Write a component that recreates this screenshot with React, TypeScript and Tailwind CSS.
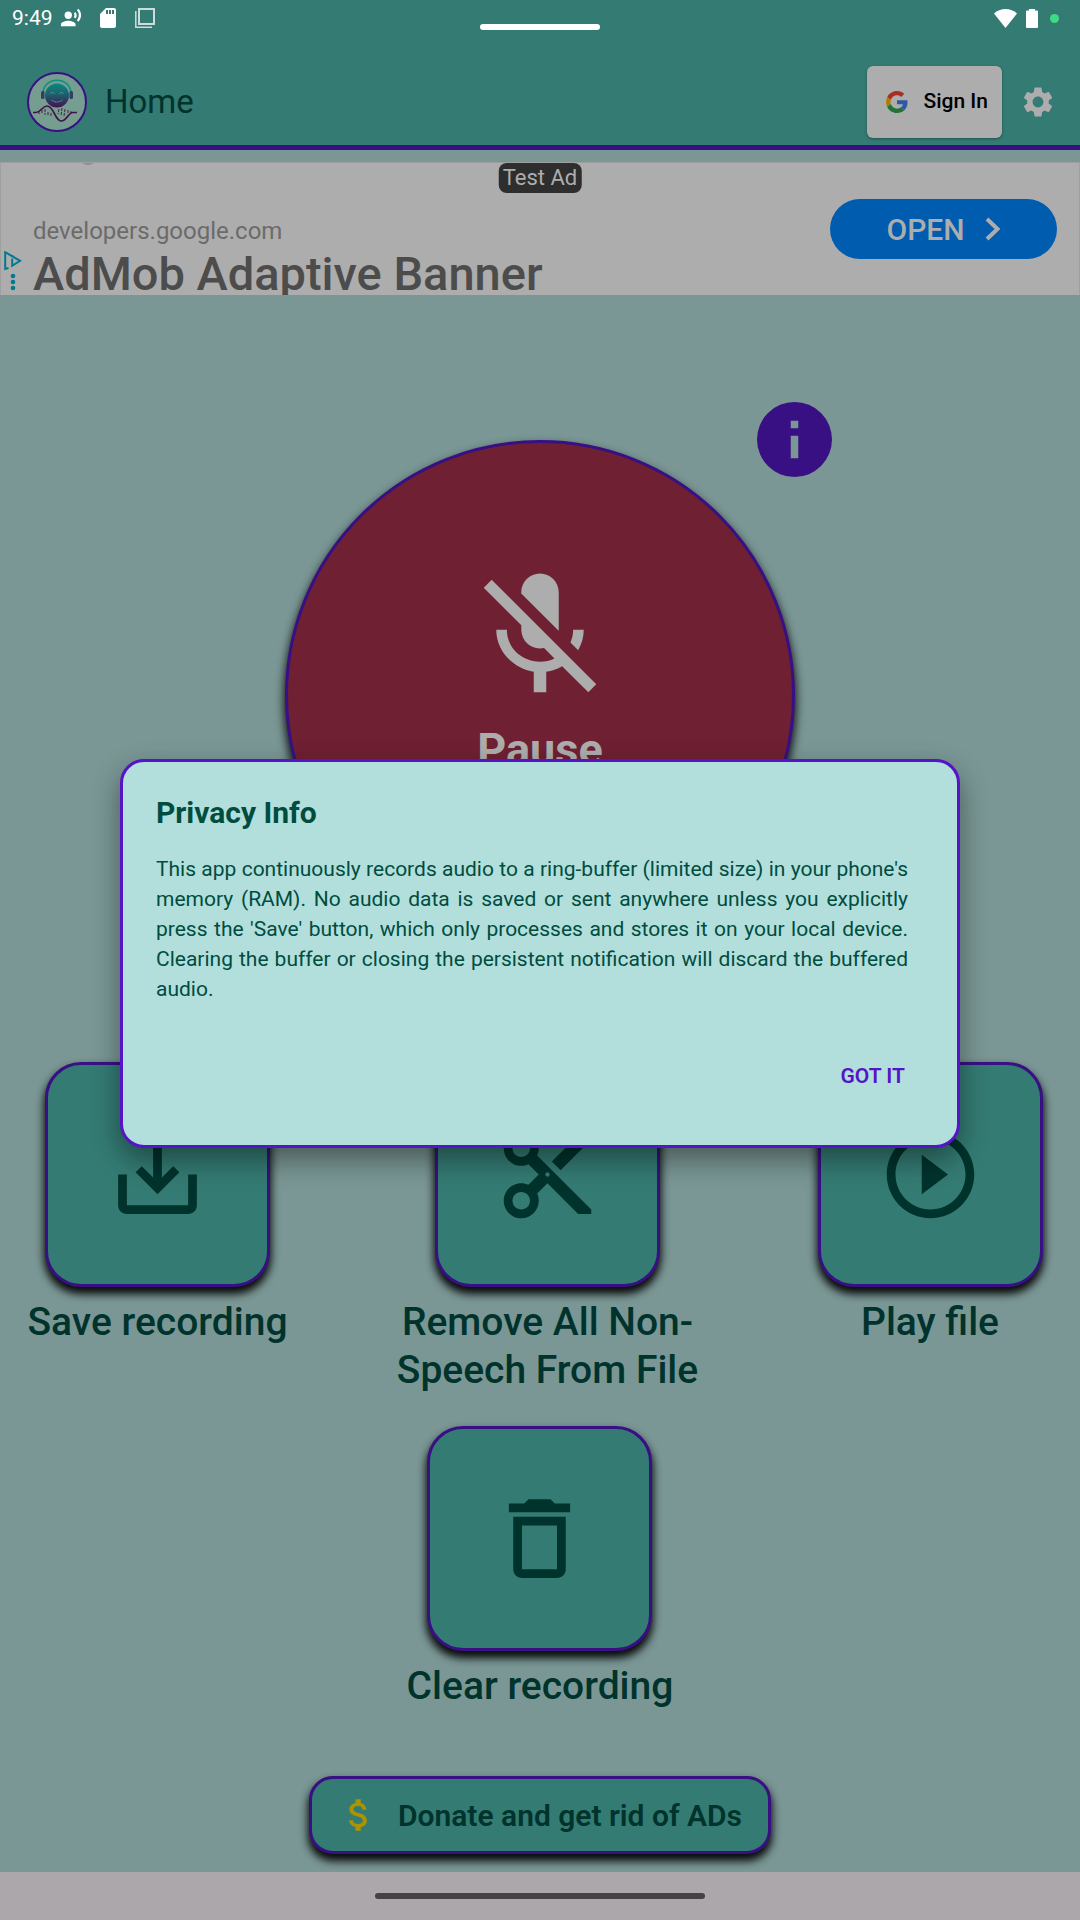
import type { ReactNode } from "react";
import {
  MdAttachMoney,
  MdContentCut,
  MdDeleteOutline,
  MdMicOff,
  MdPlayCircleOutline,
  MdRecordVoiceOver,
  MdSaveAlt,
  MdSdCard,
  MdSettings,
} from "react-icons/md";

const cardShadow = "shadow-[0_6px_8px_1px_rgba(0,0,0,0.95)]";

function StatusBar() {
  return (
    <div className="relative flex h-9 items-center pr-[21px] pl-3 text-white">
      <span className="text-[21px] leading-6">9:49</span>
      <MdRecordVoiceOver className="ml-[7px] size-[22px]" />
      <MdSdCard className="ml-3.5 size-6" />
      <svg viewBox="0 0 20 20" className="ml-[15px] size-5" fill="none" stroke="currentColor" strokeOpacity="0.75">
        <rect x="4" y="1" width="15" height="15" strokeWidth="2" />
        <path d="M.8 3v16.2H17" strokeWidth="1.5" />
      </svg>
      <div className="absolute top-6 left-1/2 h-1.5 w-30 -translate-x-1/2 rounded-full bg-white" />
      <div className="ml-auto flex items-center gap-[9px]">
        <svg viewBox="0 0 23 19" className="h-[19px] w-[23px]" fill="currentColor">
          <path d="M0 4.6C6-1.5 17-1.5 23 4.6L11.500 19z" />
        </svg>
        <svg viewBox="0 0 12 19" className="h-[19px] w-3" fill="currentColor">
          <path d="M3 0h6v1.500h2a1 1 0 0 1 1 1V18a1 1 0 0 1-1 1H1a1 1 0 0 1-1-1V2.500a1 1 0 0 1 1-1h2z" />
        </svg>
        <span className="ml-[3px] size-[9px] rounded-full bg-[#3ddc84]" />
      </div>
    </div>
  );
}

function AppLogo() {
  return (
    <svg viewBox="0 0 60 60" className="size-[60px]" fill="none" role="img" aria-label="App logo">
      <defs>
        <linearGradient id="face" x1="0" y1="10" x2="0" y2="36" gradientUnits="userSpaceOnUse">
          <stop offset="0" stopColor="#078c7f" />
          <stop offset="0.450" stopColor="#1c6470" />
          <stop offset="1" stopColor="#430f50" />
        </linearGradient>
      </defs>
      <circle cx="30" cy="30" r="29" fill="#759e91" stroke="#381084" strokeWidth="2" />
      <path d="M16 21C17 4 43 4 44 21" stroke="#0b9182" strokeWidth="1.600" />
      <circle cx="30" cy="23.500" r="12" fill="url(#face)" />
      <rect x="14" y="19" width="3.500" height="8" rx="1.500" fill="#32405f" />
      <rect x="42.500" y="19" width="3.500" height="8" rx="1.500" fill="#32405f" />
      <path d="M23.500 21.500q2-2 4 0M32.500 21.500q2-2 4 0M24.500 28q5.500 4 11 0" stroke="#7fa79c" strokeWidth="1" strokeDasharray="1.200 .6" />
      <path d="M6 40.500h3c5 0 6-6.500 11-6.500 7 0 8 15 14 15s7-8.500 12-8.500h4" stroke="#451047" strokeWidth="1.700" />
      <path d="M12 39v3M15 38v4M18 37v6M21 40v4M24 41v3M32 37l-1 5M35 36l-1 8M38 37l-1 7M41 38v4M44 39v2" stroke="#451047" strokeWidth="0.900" strokeDasharray="3 1" />
    </svg>
  );
}

function GoogleMark() {
  return (
    <svg viewBox="0 0 48 48" className="size-[22px]" aria-hidden="true">
      <path fill="#a62e25" d="M24 9.500c3.540 0 6.710 1.220 9.210 3.600l6.850-6.850C35.900 2.380 30.470 0 24 0 14.620 0 6.510 5.380 2.560 13.220l7.980 6.190C12.430 13.720 17.740 9.500 24 9.500z" />
      <path fill="#2d59a6" d="M46.980 24.550c0-1.570-.15-3.090-.38-4.550H24v9.020h12.940c-.58 2.960-2.260 5.480-4.780 7.180l7.730 6c4.510-4.180 7.090-10.360 7.090-17.650z" />
      <path fill="#aa8003" d="M10.530 28.590c-.48-1.450-.76-2.990-.76-4.590s.27-3.140.76-4.590l-7.980-6.190C.92 16.460 0 20.120 0 24c0 3.880.92 7.540 2.560 10.780l7.970-6.190z" />
      <path fill="#237339" d="M24 48c6.480 0 11.930-2.130 15.890-5.810l-7.730-6c-2.150 1.450-4.920 2.300-8.160 2.300-6.260 0-11.570-4.220-13.470-9.910l-7.980 6.190C6.510 42.620 14.620 48 24 48z" />
    </svg>
  );
}

function AppBar() {
  return (
    <div className="flex h-[114px] items-center border-b-[5px] border-[#381084] pt-[23px] pr-6 pl-[27px]">
      <AppLogo />
      <h1 className="ml-[18px] text-[33px] leading-10 text-[#00332c]">Home</h1>
      <button className="ml-auto flex h-[72px] items-center rounded-md bg-[#adadad] pr-3.5 pl-[19px] text-[21px] font-medium text-black shadow-[0_1px_3px_rgba(0,0,0,0.35)]">
        <GoogleMark />
        <span className="ml-[15px]">Sign In</span>
      </button>
      <button aria-label="Settings" className="ml-[18px] text-[#adadad]">
        <MdSettings className="size-9" />
      </button>
    </div>
  );
}

function AdBanner() {
  return (
    <aside className="relative mt-3 flex h-[133px] overflow-hidden border border-b-0 border-[#9f9f9f] bg-[#adadad]">
      <span className="absolute -top-3.5 left-[79px] size-4 rounded-full bg-[#8d8d8d]" />
      <span className="absolute top-0 left-1/2 h-[30px] -translate-x-1/2 rounded-lg bg-[#2e2e2e] px-1 text-[22px] leading-[30px] whitespace-nowrap text-[#adadad]">
        Test Ad
      </span>
      <div className="flex w-8 flex-col items-start pt-[88px] pl-[3px]">
        <svg viewBox="0 0 18 40" className="h-10 w-[18px]" fill="none" stroke="#007a8e" strokeWidth="2">
          <path d="M4.500 17L1.200 18V1.200l15 8.600-8 5V7.500M8.200 4v2" />
          <g fill="#007a8e" stroke="none">
            <circle cx="9" cy="25" r="2.300" />
            <circle cx="9" cy="31" r="2.300" />
            <circle cx="9" cy="37" r="2.300" />
          </g>
        </svg>
      </div>
      <div className="pt-[54px]">
        <p className="text-[24px] leading-7 text-[#6b6b6b]">developers.google.com</p>
        <p className="mt-[3px] text-[47px] leading-[52px] font-medium whitespace-nowrap text-[#4c4c4c]">
          AdMob Adaptive Banner
        </p>
      </div>
      <button className="mt-9 mr-[22px] ml-auto flex h-[60px] w-[227px] items-center justify-center gap-5 rounded-full bg-[#005cae] text-[30px] font-medium text-[#adadad]">
        OPEN
        <svg viewBox="0 0 16 24" className="h-6 w-4" fill="none" stroke="currentColor" strokeWidth="4">
          <path d="M2 2l10.500 10L2 22" />
        </svg>
      </button>
    </aside>
  );
}

function ActionCard({ label, children }: { label: string; children: ReactNode }) {
  return (
    <button className="flex flex-col items-center text-[39px] leading-[48px] font-medium text-[#00332c]">
      <span className={`flex size-[225px] items-center justify-center rounded-[36px] border-3 border-[#381084] bg-[#347b74] ${cardShadow}`}>
        {children}
      </span>
      <span className="mt-[11px] max-w-[312px]">{label}</span>
    </button>
  );
}

function PrivacyDialog() {
  return (
    <div className="absolute inset-0 flex items-center justify-center px-30 pt-[35px] pb-12">
      <section
        role="dialog"
        aria-labelledby="privacy-title"
        className="w-full rounded-3xl border-3 border-[#5514c8] bg-[#b2dfdc] px-[33px] pt-[33px] pb-[42px] text-[#004d40] shadow-[0_12px_28px_rgba(0,0,0,0.4)]"
      >
        <h2 id="privacy-title" className="text-[30px] leading-9 font-bold">
          Privacy Info
        </h2>
        <p className="mt-[23px] mr-4 text-justify text-[21px] leading-[30px]">
          This app continuously records audio to a ring-buffer (limited size) in your phone's memory (RAM). No audio
          data is saved or sent anywhere unless you explicitly press the 'Save' button, which only processes and stores
          it on your local device. Clearing the buffer or closing the persistent notification will discard the buffered
          audio.
        </p>
        <div className="mt-[45px] flex justify-end">
          <button className="px-[19px] py-3 text-[21px] leading-[30px] font-semibold text-[#5514c8]">GOT IT</button>
        </div>
      </section>
    </div>
  );
}

export default function App() {
  return (
    <div className="relative flex min-h-screen flex-col bg-[#7a9795] font-[Roboto,sans-serif]">
      <header className="bg-[#347b74]">
        <StatusBar />
        <AppBar />
      </header>
      <AdBanner />
      <main className="flex flex-1 flex-col items-center overflow-hidden pb-[18px]">
        <div className="relative mt-[145px]">
          <button className="flex size-[510px] flex-col items-center rounded-full border-3 border-[#381084] bg-[#6f2032] pt-[118px] text-[45px] leading-[53px] font-bold text-[#adadad] shadow-[0_6px_10px_1px_rgba(0,0,0,0.9)]">
            <MdMicOff className="size-[150px]" />
            <span className="mt-3">Pause</span>
          </button>
          <button aria-label="Info" className="absolute -top-[38px] -right-[37px] size-[75px]">
            <svg viewBox="2 2 20 20" className="size-full">
              <circle cx="12" cy="12" r="10" fill="#381084" />
              <path d="M11 7h2v2h-2zM11 11h2v6h-2z" fill="#7a9795" />
            </svg>
          </button>
        </div>
        <div className="mt-28 grid w-full grid-cols-[261fr_519fr_246fr] items-start justify-items-center px-[27px]">
          <ActionCard label="Save recording">
            <MdSaveAlt className="size-[105px]" />
          </ActionCard>
          <ActionCard label="Remove All Non-Speech From File">
            <MdContentCut className="size-[105px]" />
          </ActionCard>
          <ActionCard label="Play file">
            <MdPlayCircleOutline className="size-[105px]" />
          </ActionCard>
        </div>
        <div className="mt-8">
          <ActionCard label="Clear recording">
            <MdDeleteOutline className="size-[105px]" />
          </ActionCard>
        </div>
        <button className={`mt-[66px] flex h-[78px] items-center rounded-3xl border-3 border-[#381084] bg-[#347b74] px-[26px] text-[30px] font-semibold text-[#00332c] ${cardShadow}`}>
          <MdAttachMoney className="size-[42px] text-[#ad9300]" />
          <span className="ml-[18px]">Donate and get rid of ADs</span>
        </button>
      </main>
      <footer className="flex h-12 items-center justify-center bg-[#aca7ab]">
        <div className="h-1.5 w-[330px] rounded-full bg-[#454246]" />
      </footer>
      <PrivacyDialog />
    </div>
  );
}
